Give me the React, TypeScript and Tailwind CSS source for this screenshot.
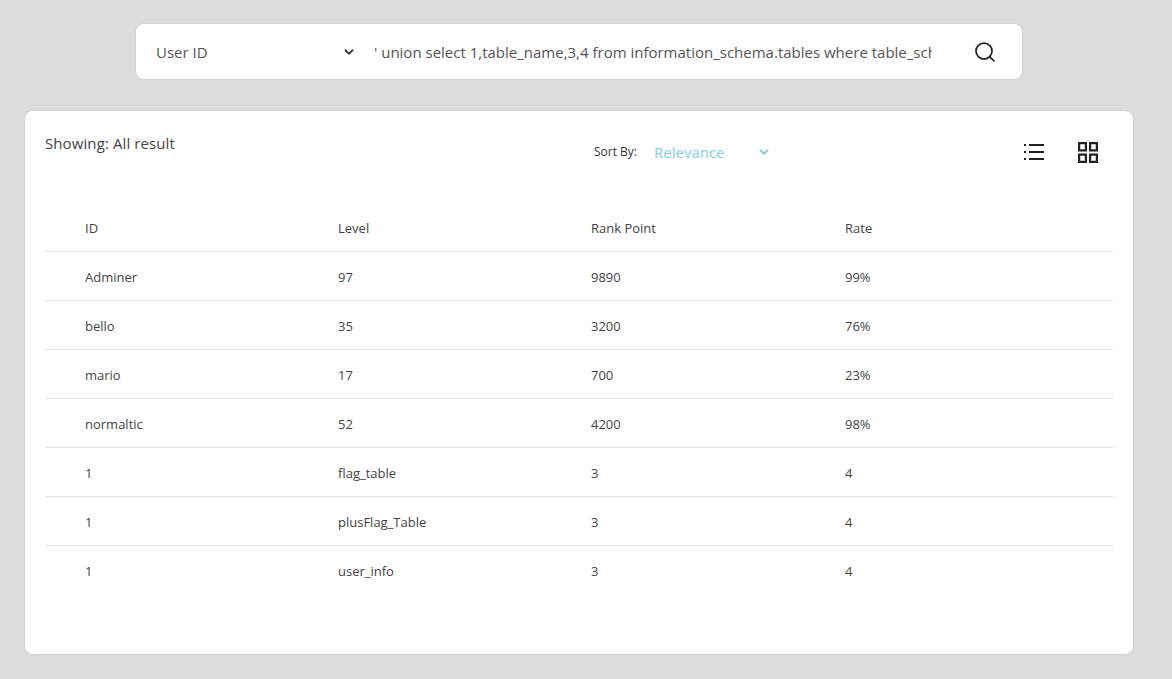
import { ChevronDown, Search } from 'lucide-react';

const columns = ['ID', 'Level', 'Rank Point', 'Rate'];

const rows = [
  ['Adminer', '97', '9890', '99%'],
  ['bello', '35', '3200', '76%'],
  ['mario', '17', '700', '23%'],
  ['normaltic', '52', '4200', '98%'],
  ['1', 'flag_table', '3', '4'],
  ['1', 'plusFlag_Table', '3', '4'],
  ['1', 'user_info', '3', '4'],
];

function ListIcon() {
  return (
    <svg width="20" height="16" viewBox="0 0 20 16" fill="none" stroke="#222" strokeWidth="2">
      <path d="M0 1h2M0 8h2M0 15h2M5 1h15M5 8h15M5 15h15" />
    </svg>
  );
}

function GridIcon() {
  return (
    <svg width="20" height="21" viewBox="0 0 20 21" fill="none" stroke="#222" strokeWidth="2.25">
      <rect x="1.1" y="1.1" width="6.8" height="7.3" />
      <rect x="12.1" y="1.1" width="6.8" height="7.3" />
      <rect x="1.1" y="12.6" width="6.8" height="7.3" />
      <rect x="12.1" y="12.6" width="6.8" height="7.3" />
    </svg>
  );
}

export default function App() {
  return (
    <div className="min-h-[679px] bg-[#dcdcdc] pt-6 px-[25px] font-['Open_Sans',sans-serif] text-[#444]">
      {/* Search bar */}
      <div className="mx-[111px] h-[55px] w-[886px] flex items-center rounded-lg bg-white shadow-[0_0_2px_rgba(0,0,0,0.15)]">
        <span className="ml-5 w-[186px] pt-px text-[15px] text-[#555]">User ID</span>
        <ChevronDown size={14} strokeWidth={3.5} className="text-[#444]" />
        <input
          readOnly
          value="' union select 1,table_name,3,4 from information_schema.tables where table_schema='segfault_sql'"
          className="ml-[18px] w-[558px] pt-px text-[15px] text-[#555] outline-none"
        />
        <Search size={24} strokeWidth={1.75} className="ml-[41px] mt-px text-[#222]" />
      </div>

      {/* Results */}
      <div className="mt-[32px] h-[543px] w-[1108px] rounded-lg bg-white px-5 shadow-[0_0_2px_rgba(0,0,0,0.15)]">
        <div className="flex h-[76px]">
          <p className="w-[549px] pt-[22px] text-[15px] leading-5 tracking-[0.1px]">Showing: All result</p>
          <div className="flex h-[82px] items-center">
            <span className="w-[60px] text-xs text-[#333]">Sort By:</span>
            <span className="w-[103px] text-[15px] text-[#7fd0de]">Relevance</span>
            <ChevronDown size={14} strokeWidth={3.5} className="text-[#7fd0de]" />
          </div>
          <div className="ml-[253px] flex h-[82px] items-center gap-[34px]">
            <ListIcon />
            <GridIcon />
          </div>
        </div>

        <div className="mt-[16px] grid h-[49px] grid-cols-[253px_253px_254px_1fr] items-center border-b border-[#e2e2e2] pl-10 pt-1 text-[13px]">
          {columns.map((column) => (
            <span key={column}>{column}</span>
          ))}
        </div>
        {rows.map((row, rowIndex) => (
          <div
            key={rowIndex}
            className="grid h-[49px] grid-cols-[253px_253px_254px_1fr] items-center border-b border-[#e2e2e2] pl-10 pt-1 text-[13px] last:border-transparent"
          >
            {row.map((cell, cellIndex) => (
              <span key={cellIndex}>{cell}</span>
            ))}
          </div>
        ))}
      </div>
    </div>
  );
}
